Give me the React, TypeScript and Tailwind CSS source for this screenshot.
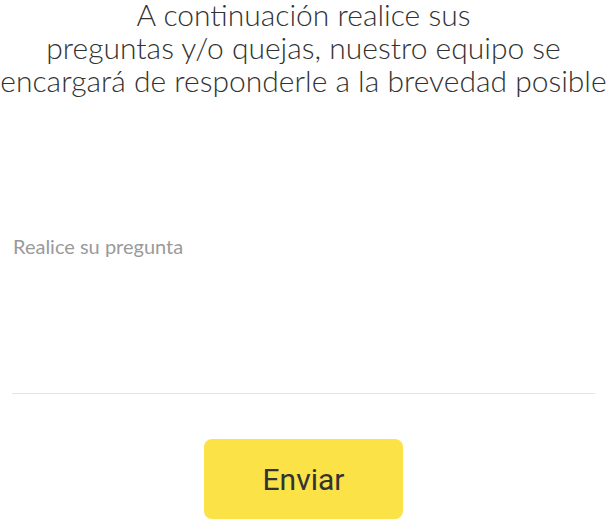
export default function App() {
  return (
    <div className="w-[607px] h-[520px] bg-white overflow-hidden" style={{ fontFamily: "Lato, sans-serif" }}>
      <div className="pt-[2px]">
        <h1 className="-mt-[4px] text-center font-light text-[30px] leading-[33px] text-[#333] whitespace-nowrap" style={{ fontFamily: "Lato, sans-serif" }}>
          A continuación realice sus
          <br />
          preguntas y/o quejas, nuestro equipo se
          <br />
          encargará de responderle a la brevedad posible
        </h1>
      </div>
      <div className="mx-[12px] mt-[137px] h-[160px] border-b border-[#e4e4e4]">
        <label className="block pl-[1px] text-[20px] leading-[24px] text-[#9a9a9a]">Realice su pregunta</label>
      </div>
      <div className="flex justify-center mt-[45px]">
        <button
          className="w-[199px] h-[80px] rounded-[8px] bg-[#fae247] text-[30px] text-[#333]"
          style={{ fontFamily: "Roboto, sans-serif" }}
        >
          Enviar
        </button>
      </div>
    </div>
  );
}
